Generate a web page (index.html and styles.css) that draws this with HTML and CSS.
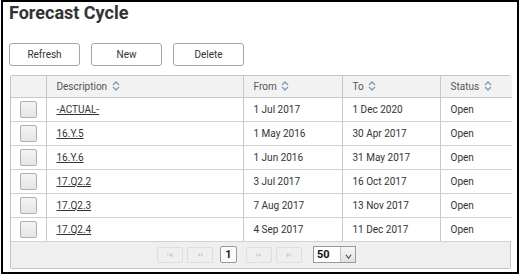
FILE: index.html
```html
<!DOCTYPE html>
<html>
<head>
<meta charset="utf-8">
<link rel="stylesheet" href="styles.css">
</head>
<body>
<div class="frame">
  <h1 class="title">Forecast Cycle</h1>
  <div class="toolbar">
    <button class="btn">Refresh</button>
    <button class="btn">New</button>
    <button class="btn">Delete</button>
  </div>
  <div class="grid">
    <table class="tbl">
      <colgroup>
        <col class="c-chk"><col class="c-desc"><col class="c-from"><col class="c-to"><col class="c-status">
      </colgroup>
      <thead>
        <tr>
          <th></th>
          <th>Description <svg class="sort" viewBox="0 0 8 10"><path d="M1 4 L4 1 L7 4 M1 6 L4 9 L7 6" fill="none" stroke="#7d9bb6" stroke-width="1.3"/></svg></th>
          <th>From <svg class="sort" viewBox="0 0 8 10"><path d="M1 4 L4 1 L7 4 M1 6 L4 9 L7 6" fill="none" stroke="#7d9bb6" stroke-width="1.3"/></svg></th>
          <th>To <svg class="sort" viewBox="0 0 8 10"><path d="M1 4 L4 1 L7 4 M1 6 L4 9 L7 6" fill="none" stroke="#7d9bb6" stroke-width="1.3"/></svg></th>
          <th>Status <svg class="sort" viewBox="0 0 8 10"><path d="M1 4 L4 1 L7 4 M1 6 L4 9 L7 6" fill="none" stroke="#7d9bb6" stroke-width="1.3"/></svg></th>
        </tr>
      </thead>
      <tbody>
        <tr><td><span class="chk"></span></td><td><a href="#">-ACTUAL-</a></td><td>1 Jul 2017</td><td>1 Dec 2020</td><td>Open</td></tr>
        <tr><td><span class="chk"></span></td><td><a href="#">16.Y.5</a></td><td>1 May 2016</td><td>30 Apr 2017</td><td>Open</td></tr>
        <tr><td><span class="chk"></span></td><td><a href="#">16.Y.6</a></td><td>1 Jun 2016</td><td>31 May 2017</td><td>Open</td></tr>
        <tr><td><span class="chk"></span></td><td><a href="#">17.Q2.2</a></td><td>3 Jul 2017</td><td>16 Oct 2017</td><td>Open</td></tr>
        <tr><td><span class="chk"></span></td><td><a href="#">17.Q2.3</a></td><td>7 Aug 2017</td><td>13 Nov 2017</td><td>Open</td></tr>
        <tr><td><span class="chk"></span></td><td><a href="#">17.Q2.4</a></td><td>4 Sep 2017</td><td>11 Dec 2017</td><td>Open</td></tr>
      </tbody>
    </table>
    <div class="pager">
      <span class="pbtn"><svg viewBox="0 0 12 8"><path d="M3 1.5 V6.5 M8.5 1.5 L5 4 L8.5 6.5 Z" fill="#cfcfcf" stroke="#cfcfcf" stroke-width="1"/></svg></span>
      <span class="pbtn"><svg viewBox="0 0 12 8"><path d="M6 1.5 L2.5 4 L6 6.5 Z M9.5 1.5 L6 4 L9.5 6.5 Z" fill="#cfcfcf"/></svg></span>
      <span class="pnum">1</span>
      <span class="pbtn"><svg viewBox="0 0 12 8"><path d="M2.5 1.5 L6 4 L2.5 6.5 Z M6 1.5 L9.5 4 L6 6.5 Z" fill="#cfcfcf"/></svg></span>
      <span class="pbtn"><svg viewBox="0 0 12 8"><path d="M9 1.5 V6.5 M3.5 1.5 L7 4 L3.5 6.5 Z" fill="#cfcfcf" stroke="#cfcfcf" stroke-width="1"/></svg></span>
      <span class="psel"><span class="psel-val">50</span><span class="psel-arrow"><svg viewBox="0 0 10 8"><path d="M2 2 L5 6 L8 2" fill="none" stroke="#3d5a7a" stroke-width="1.4"/></svg></span></span>
    </div>
  </div>
</div>
</body>
</html>
```

FILE: styles.css
```css
* { box-sizing: border-box; }
html, body { margin: 0; padding: 0; background: #fff; }
body { font-family: Roboto, "Liberation Sans", Arial, sans-serif; color: #333; }

.frame {
  margin-left: 1px;
  width: 518px;
  height: 274px;
  border: 2px solid #000;
  padding: 0 0 0 6px;
}

.title {
  margin: 0;
  padding-top: 0;
  font-size: 18px;
  line-height: 22px;
  font-weight: 700;
  color: #333;
}

.toolbar {
  display: flex;
  gap: 11px;
  margin-top: 19px;
  padding-left: 0;
}

.btn {
  width: 71px;
  height: 23px;
  border: 1px solid #a6a6a6;
  border-radius: 3px;
  background: #fff;
  font-family: Roboto, "Liberation Sans", Arial, sans-serif;
  font-size: 10px;
  color: #333;
  padding: 0;
}

.grid {
  margin-top: 9px;
  margin-left: 1px;
  width: 501px;
  border: 1px solid #c4c4c4;
  border-radius: 2px;
}

.tbl {
  width: 100%;
  border-collapse: collapse;
  table-layout: fixed;
  font-size: 10px;
}

.c-chk { width: 35px; }
.c-desc { width: 197px; }
.c-from { width: 99px; }
.c-to { width: 98px; }
.c-status { width: 72px; }

.tbl th {
  height: 21px;
  background: #f2f2f2;
  color: #555;
  font-weight: 400;
  text-align: left;
  padding: 0 0 0 10px;
  border-left: 1px solid #c8c8c8;
  border-bottom: 1px solid #c8c8c8;
}

.tbl th:first-child, .tbl td:first-child { border-left: none; }

.tbl td {
  height: 24px;
  padding: 0 0 0 10px;
  border-left: 1px solid #c8c8c8;
  border-bottom: 1px solid #d2d2d2;
  color: #333;
  background: #fff;
}

.tbl td:first-child { padding: 0 0 0 9px; }

.tbl a { color: #333; text-decoration: underline; }

.sort {
  width: 8px;
  height: 10px;
  vertical-align: -1px;
  margin-left: 2px;
}

.chk {
  display: block;
  width: 17px;
  height: 17px;
  border: 1px solid #b0b0b0;
  border-radius: 2px;
  background: linear-gradient(#f4f4f4, #e6e6e6);
}

.pager {
  height: 26px;
  background: #efefef;
  display: flex;
  align-items: center;
  padding-left: 146px;
  gap: 4px;
}

.pbtn {
  width: 26px;
  height: 16px;
  border: 1px solid #dedede;
  border-radius: 2px;
  display: flex;
  align-items: center;
  justify-content: center;
}

.pbtn svg { width: 10px; height: 6px; }

.pnum {
  width: 17px;
  height: 17px;
  margin: 0 5px 0 3px;
  border: 1px solid #9a9a9a;
  border-radius: 2px;
  background: #fafafa;
  font-size: 11px;
  font-weight: 700;
  color: #222;
  display: flex;
  align-items: center;
  justify-content: center;
}

.psel {
  margin-left: 7px;
  width: 43px;
  height: 17px;
  border: 1px solid #9a9a9a;
  display: flex;
  background: #fff;
}

.psel-val {
  flex: 1;
  font-size: 11px;
  font-weight: 700;
  color: #111;
  padding-left: 3px;
  line-height: 15px;
}

.psel-arrow {
  width: 15px;
  border-left: 1px solid #c0c0c0;
  background: linear-gradient(#f6f6f6, #e2e2e2);
  display: flex;
  align-items: flex-end;
  justify-content: center;
  padding-bottom: 2px;
}

.psel-arrow svg { width: 9px; height: 7px; }
```
